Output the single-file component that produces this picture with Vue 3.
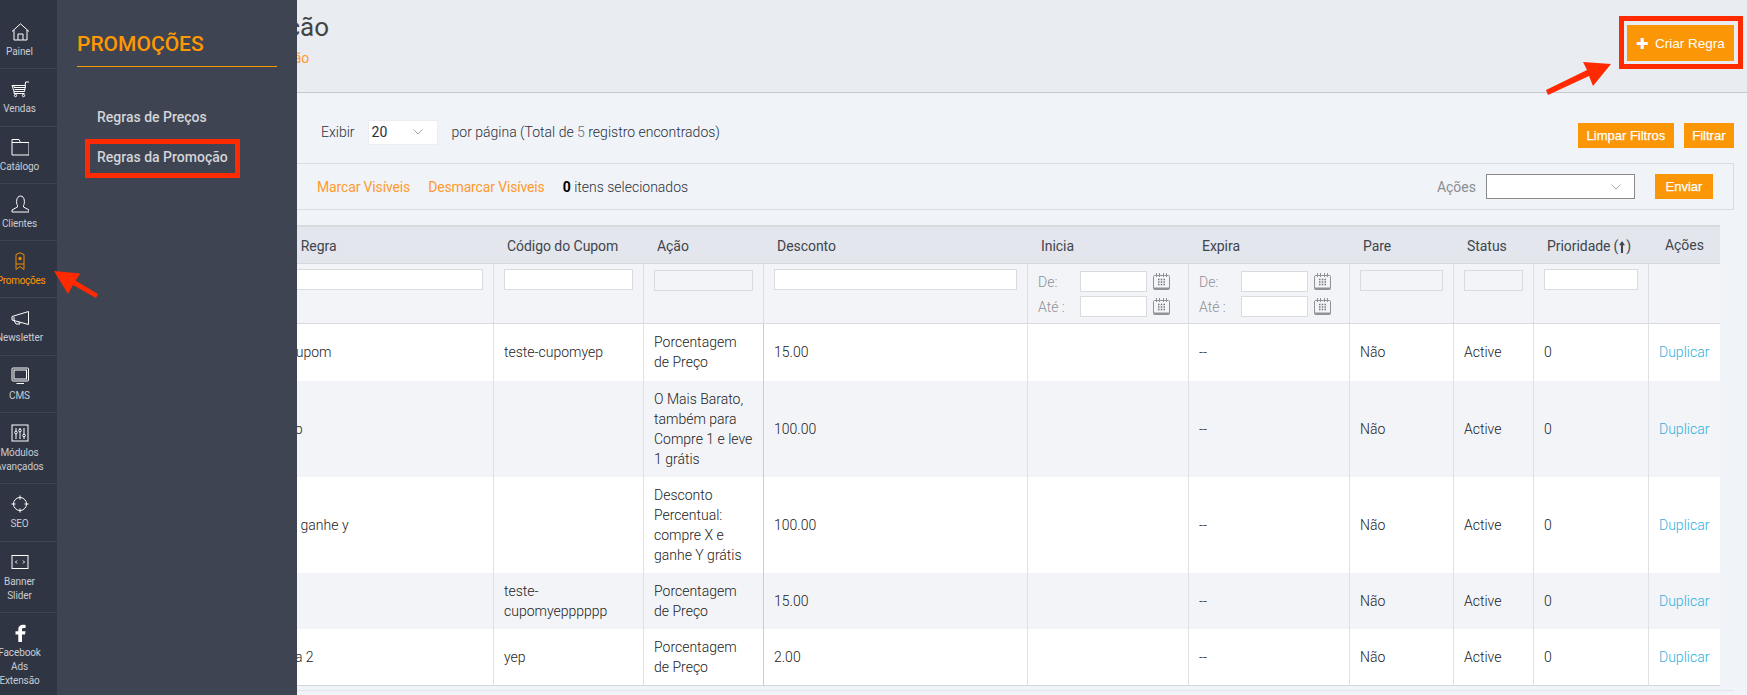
<script setup>
const nav = [
  { k: 'home', l: ['Painel'] },
  { k: 'cart', l: ['Vendas'] },
  { k: 'folder', l: ['Catálogo'] },
  { k: 'user', l: ['Clientes'] },
  { k: 'promo', l: ['Promoções'], on: true },
  { k: 'mega', l: ['Newsletter'] },
  { k: 'cms', l: ['CMS'] },
  { k: 'mod', l: ['Módulos', 'Avançados'] },
  { k: 'seo', l: ['SEO'] },
  { k: 'banner', l: ['Banner', 'Slider'] },
  { k: 'fb', l: ['Facebook', 'Ads', 'Extensão'] }
]
const rows = [
  { name: 'Teste - cupom', code: 'teste-cupomyep', act: 'Porcentagem de\u00a0Preço', d: '15.00' },
  { name: 'Desconto', code: '', act: 'O Mais Barato, também para Compre 1 e leve 1\u00a0grátis', d: '100.00' },
  { name: 'Regras x ganhe y', code: '', act: 'Desconto Percentual: compre X e ganhe Y grátis', d: '100.00' },
  { name: 'Regra', code: 'teste-cupomyepppppp', act: 'Porcentagem de\u00a0Preço', d: '15.00' },
  { name: 'Sua regra 2', code: 'yep', act: 'Porcentagem de\u00a0Preço', d: '2.00' }
]
</script>

<template>
  <div class="page">
    <aside class="nav">
      <a v-for="n in nav" :key="n.k" class="item" :class="{ on: n.on }">
        <svg class="ico" viewBox="0 0 18 18" fill="none" stroke="currentColor" stroke-width="1">
          <template v-if="n.k === 'home'"><path d="M1 8.500 9.500.800 18 8.500M3 7v10h13V7M7 17v-6h5v6" /></template>
          <template v-else-if="n.k === 'cart'"><path d="M1 5.500h13.500l-1 6H3zM3 5.500v2h11.500M3.500 9.500h10.500M14 5.500l.6-3.500H18M3 11.500v2h10.500" /><circle cx="4.500" cy="15.500" r="1.200" /><circle cx="12.500" cy="15.500" r="1.200" /></template>
          <template v-else-if="n.k === 'folder'"><path d="M1 17V1.500h7l1.500 3H18V17zM1 4.500h8.500" /></template>
          <template v-else-if="n.k === 'user'"><path d="M6.500 10.500C5 8.500 5 1 9.500 1s4.500 7.500 3 9.500v1.500l5.500 3v2H1v-2l5.500-3z" /></template>
          <template v-else-if="n.k === 'promo'"><path d="M5 2.500 9 .800l4 1.700v15L9 14.500l-4 3z" /><circle cx="9" cy="6.500" r="1.300" fill="currentColor" /><path d="M5 12h8" /></template>
          <template v-else-if="n.k === 'mega'"><path d="M1 7.500 17.500 2.500v13L1 11zM3 8v3.500L5 15h4l-1.500-2.500" /></template>
          <template v-else-if="n.k === 'cms'"><rect x="1" y="1" width="16.500" height="13" rx="1" /><rect x="3" y="3" width="12.500" height="9" /><path d="M5.500 16.500h7.500" /></template>
          <template v-else-if="n.k === 'mod'"><rect x="1" y="1" width="16" height="16" /><path d="M5 4v3M5 10v5M9 4v1M9 8v7M13 4v6M13 13v2" /><circle cx="5" cy="8.500" r="1.300" /><circle cx="9" cy="6.500" r="1.300" /><circle cx="13" cy="11.500" r="1.300" /></template>
          <template v-else-if="n.k === 'seo'"><circle cx="9" cy="9" r="6.500" /><path d="M9 .500v4M9 13.500v4M.500 9h4M13.500 9h4" /></template>
          <template v-else-if="n.k === 'banner'"><rect x="1" y="2.500" width="16" height="13" /><path d="M6 7.500 4.500 9 6 10.500M12 7.500 13.500 9 12 10.500" /></template>
          <template v-else><path d="M11 18V10.500h3l.500-3.200H11V5.400c0-1 .400-1.500 1.600-1.500h2V1.100C14.200 1 13.200.800 12 .800 9.300.800 7.300 2.500 7.300 5v2.300H4.500v3.200h2.800V18z" fill="currentColor" stroke="none" /></template>
        </svg>
        <span v-for="t in n.l" :key="t" class="lab">{{ t }}</span>
      </a>
    </aside>

    <main class="main">
      <header class="head">
        <div class="titles">
          <h1>Regras da Promoção</h1>
          <a class="sub">Como criar regras de promoção</a>
        </div>
        <div class="create-wrap"><button class="btn create"><span class="plus">✚</span>Criar Regra</button></div>
      </header>

      <div class="body">
        <div class="pager">
          <div class="pager-left">
            <span class="lead"></span>
            <span>Exibir</span>
            <span class="sel small"><span>20</span><svg viewBox="0 0 10 6" class="chev"><path d="M.5.500 5 5 9.500.500" /></svg></span>
            <span>por página (Total de <span class="soft">5</span> registro encontrados)</span>
          </div>
          <div class="pager-right">
            <button class="btn">Limpar Filtros</button>
            <button class="btn">Filtrar</button>
          </div>
        </div>

        <div class="tools">
          <div class="tools-left">
            <span class="lead2"></span>
            <a class="link">Marcar Visíveis</a>
            <a class="link">Desmarcar Visíveis</a>
            <span><b>0</b> itens selecionados</span>
          </div>
          <div class="tools-right">
            <span class="acts">Ações</span>
            <span class="sel big"><span></span><svg viewBox="0 0 10 6" class="chev"><path d="M.5.500 5 5 9.500.500" /></svg></span>
            <button class="btn send">Enviar</button>
          </div>
        </div>

        <table class="grid">
          <colgroup>
            <col style="width:60px" /><col style="width:66px" /><col style="width:260px" /><col style="width:150px" />
            <col style="width:120px" /><col style="width:264px" /><col style="width:161px" /><col style="width:161px" />
            <col style="width:104px" /><col style="width:80px" /><col style="width:115px" /><col style="width:71px" />
          </colgroup>
          <thead>
            <tr class="hrow">
              <th></th><th>ID</th><th class="nm">Nome da Regra</th><th>Código do Cupom</th><th>Ação</th><th>Desconto</th>
              <th>Inicia</th><th>Expira</th><th>Pare</th><th>Status</th>
              <th>Prioridade<span class="up">(<svg class="arr" viewBox="0 0 7 14"><path d="M3.500 0 7 5H4.700v9H2.300V5H0z" fill="#41454d" /></svg>)</span></th><th class="last">Ações</th>
            </tr>
            <tr class="frow">
              <td></td><td></td>
              <td><input class="inp" /></td>
              <td><input class="inp" /></td>
              <td><input class="inp dis" disabled /></td>
              <td><input class="inp" /></td>
              <td v-for="c in 2" :key="c">
                <div v-for="t in ['De:', 'Até :']" :key="t" class="dt">
                  <span class="dl">{{ t }}</span>
                  <input class="inp d" />
                  <svg class="cal" viewBox="0 0 17 17">
                    <rect x="0.500" y="2.500" width="16" height="14" rx="1" fill="#f3f4f8" stroke="#8f9296" />
                    <path d="M3.500 0v4M6.500 0v4M10.500 0v4M13.500 0v4" stroke="#8f9296" />
                    <path d="M1 15.500h15" stroke="#8f9296" stroke-width="2" />
                    <path d="M5 6.500h7M5 9h7M5 11.500h7" stroke="#777" stroke-width="1.500" stroke-dasharray="1.500 1.250" />
                  </svg>
                </div>
              </td>
              <td><input class="inp dis" disabled /></td>
              <td><input class="inp dis" disabled /></td>
              <td><input class="inp" /></td>
              <td></td>
            </tr>
          </thead>
          <tbody>
            <tr v-for="(r, i) in rows" :key="i" class="drow">
              <td></td><td>{{ i + 1 }}</td>
              <td>{{ r.name }}</td>
              <td class="code">{{ r.code }}</td>
              <td class="act">{{ r.act }}</td>
              <td class="thick">{{ r.d }}</td>
              <td></td>
              <td>--</td>
              <td>Não</td>
              <td>Active</td>
              <td>0</td>
              <td><a class="dup">Duplicar</a></td>
            </tr>
          </tbody>
        </table>
        <div class="foot"></div>
      </div>
    </main>

    <div class="fly">
      <h2>PROMOÇÕES</h2>
      <a class="fl">Regras de Preços</a>
      <a class="fl">Regras da Promoção</a>
    </div>

    <div class="redbox menu-box"></div>
    <div class="redbox btn-box"></div>
    <svg class="arrows" viewBox="0 0 1747 695" fill="#ff2a00">
      <path d="M54 271 80.500 273.500 75.500 280.500 98 294 96 298 73 285 68 294z" />
      <path d="M1611 64 1593 86 1589 76 1548 95 1546 90 1587 70 1583 62z" />
    </svg>
  </div>
</template>

<style>
html, body { margin: 0; background: #f0f3f8; }
</style>

<style scoped>
.page { position: relative; width: 1747px; height: 695px; overflow: hidden; display: flex; font: 300 14px/20px Roboto, sans-serif; color: #333; background: #f0f3f8; }
.nav { width: 57px; flex: none; background: #2f3542; padding-top: 12px; overflow: hidden; box-sizing: border-box; }
.item { display: flex; flex-direction: column; align-items: center; box-sizing: content-box; width: 39px; padding: 11px 18px 9.300px 0; border-bottom: 1px solid #3e4451; color: #fff; position: relative; }
.item:last-child { border-bottom: 0; }
.item.on { color: #f08c00; }
.ico { width: 18px; height: 18px; flex: none; display: block; margin-bottom: 4px; }
.lab { font-size: 10px; line-height: 14px; font-weight: 400; letter-spacing: -0.1px; color: #c9ccd3; white-space: nowrap; }
.item.on .lab { color: #ff9800; letter-spacing: -0.3px; margin-left: 3px; }

.main { flex: 1; min-width: 0; }
.head { height: 92px; box-sizing: content-box; background: #e9ecf1; border-bottom: 1px solid #c5c7ca; display: flex; justify-content: space-between; padding-left: 30px; padding-right: 13px; }
h1 { margin: 10px 0 0; font-size: 26px; line-height: 34px; font-weight: 400; color: #444; white-space: nowrap; }
.sub { display: block; margin: 4px 0 0 25px; color: #ff9a2e; font-weight: 400; }
.create-wrap { padding-top: 25px; }
.btn { border: 0; background: #fb9706; color: #fff; font: 400 13px/25px "Liberation Sans", sans-serif; -webkit-text-stroke: 0.25px #fff; height: 25px; padding: 0 8.500px; }
.create { height: 36px; width: 107px; font-size: 13.500px; -webkit-text-stroke: 0; display: flex; align-items: center; justify-content: center; gap: 6px; padding: 0; }
.send { width: 58px; padding: 0; }
.plus { font-size: 15px; }

.body { padding: 0 13px 0 50px; }
.pager { height: 70px; display: flex; justify-content: space-between; align-items: center; padding-top: 8px; box-sizing: border-box; color: #2c3038; }
.pager-left { display: flex; align-items: center; gap: 13px; }
.lead { width: 201px; }
.soft { color: #6b7280; }
.pager-right { display: flex; gap: 10px; margin-top: 7px; }
.sel { display: inline-flex; align-items: center; justify-content: space-between; background: #fff; box-sizing: border-box; height: 25px; }
.small { width: 70px; border: 1px solid #ebedf0; padding: 0 14px 0 3px; margin-right: 1px; font-weight: 400; }
.big { width: 149px; border: 1px solid #8a8a8a; padding: 0 13px 0 3px; margin: 0 20px 0 10px; }
.chev { width: 10px; height: 6px; fill: none; stroke: #a4a7ab; stroke-width: 1; }

.tools { height: 47px; box-sizing: border-box; border: 1px solid #d9dce1; display: flex; justify-content: space-between; align-items: center; padding-right: 20px; margin-bottom: 15px; }
.tools-left { display: flex; align-items: center; gap: 18px; color: #2c3038; }
.lead2 { width: 209px; margin-right: -18px; }
.link { color: #ff9a2e; font-weight: 400; letter-spacing: -0.15px; }
.tools-left b { color: #000; font-weight: 700; }
.tools-right { display: flex; align-items: center; }
.acts { color: #8b8e93; font-weight: 400; }

.grid { table-layout: fixed; width: 1612px; margin-left: 1px; border-collapse: separate; border-spacing: 0; border-top: 2px solid #d9dadd; }
.hrow th { height: 34px; padding: 2px 0 0 13px; text-align: left; font-weight: 400; letter-spacing: -0.05px; background: #e3e6ec; color: #41454d; border-bottom: 1px solid #d4d7dc; box-sizing: content-box; white-space: nowrap; }
.hrow th.nm { padding-left: 7px; }
.hrow th.last { padding-left: 16px; vertical-align: top; padding-top: 8px; height: 28px; }
.up { margin-left: 3px; }
.arr { width: 6px; height: 12px; vertical-align: -2px; margin: 0 1px; }
.frow td { height: 60px; padding: 5px 10px 0; vertical-align: top; box-sizing: border-box; background: #f3f4f8; border-right: 1px solid #dcdee3; border-bottom: 1px solid #d9dbe0; }
.inp { display: block; width: 100%; height: 21px; box-sizing: border-box; border: 1px solid #d9dbdf; background: #fff; padding: 0; margin: 0; outline: 0; }
.inp.dis { background: #f3f4f8; margin-top: 1px; }
.dt { display: flex; align-items: center; height: 25px; color: #8e9196; }
.dl { width: 42px; flex: none; }
.inp.d { width: 67px; margin: 0 6px 0 0; flex: none; }
.cal { width: 17px; height: 17px; flex: none; }
.drow td { padding: 8px 10px; border-right: 1px solid #dfe1e5; background: #fff; color: #222; vertical-align: middle; }
.drow:nth-child(even) td { background: #f3f4f8; }
.drow:first-child td { padding-bottom: 9px; }
.drow:last-child td { border-bottom: 1px solid #d3d6db; }
.drow td.code { padding-right: 4px; overflow-wrap: anywhere; }
.drow td.act { padding-right: 2px; border-right-color: #c9ccd3; }
.grid td:last-child, .grid th { border-right: 0; }
.dup { color: #2fb0dc; font-weight: 300; }
.foot { height: 1px; margin-top: 4px; background: #e2e4e8; width: 1627px; }

.fly { position: absolute; left: 57px; top: 0; width: 240px; height: 695px; box-sizing: border-box; background: #3e4451; padding: 31px 20px 0; }
.fly h2 { margin: 0 0 30px; font-size: 21px; line-height: 26px; font-weight: 500; color: #ff9800; padding-bottom: 9px; border-bottom: 1px solid #ff9800; }
.fl { display: block; padding-left: 20px; height: 40px; line-height: 40px; font-weight: 500; color: #d2d4d9; }
.redbox { position: absolute; box-sizing: border-box; border: 5px solid #ff2a00; }
.menu-box { left: 85px; top: 139px; width: 155px; height: 39px; }
.btn-box { left: 1619px; top: 16px; width: 124px; height: 53px; }
.arrows { position: absolute; left: 0; top: 0; width: 1747px; height: 695px; pointer-events: none; }
</style>
